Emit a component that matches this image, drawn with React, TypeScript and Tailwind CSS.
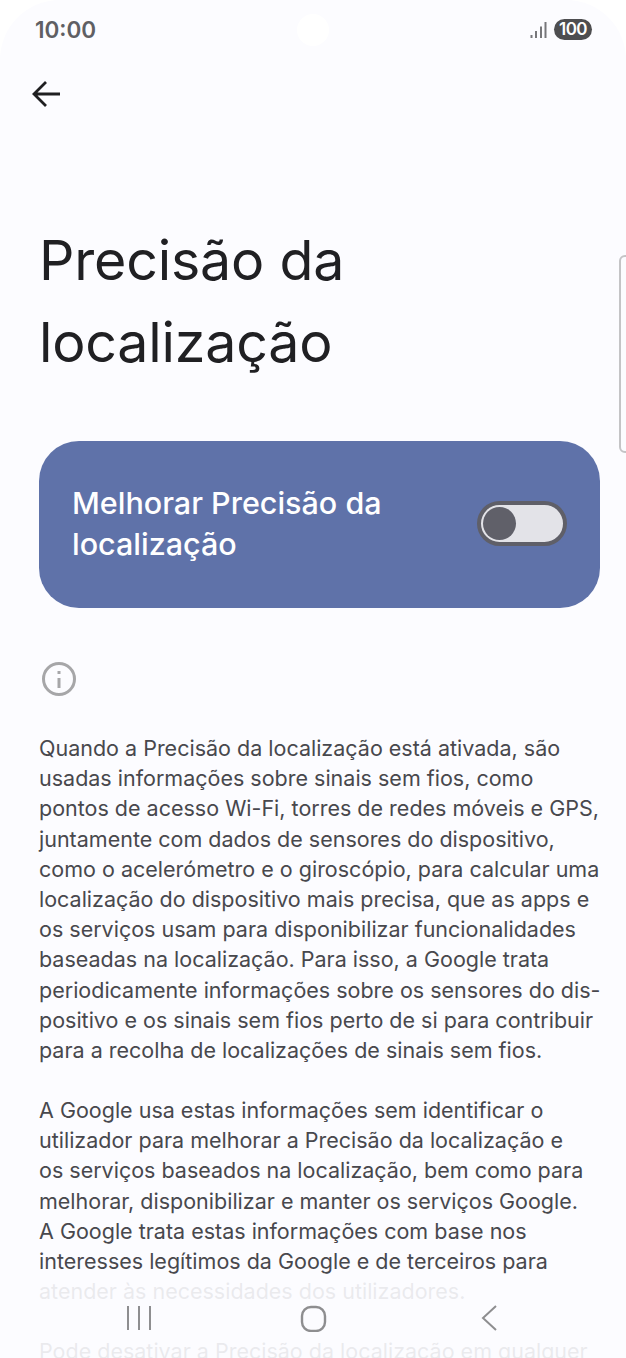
import React from "react";

const p1 = [
  "Quando a Precisão da localização está ativada, são",
  "usadas informações sobre sinais sem fios, como",
  "pontos de acesso Wi-Fi, torres de redes móveis e GPS,",
  "juntamente com dados de sensores do dispositivo,",
  "como o acelerómetro e o giroscópio, para calcular uma",
  "localização do dispositivo mais precisa, que as apps e",
  "os serviços usam para disponibilizar funcionalidades",
  "baseadas na localização. Para isso, a Google trata",
  "periodicamente informações sobre os sensores do dis-",
  "positivo e os sinais sem fios perto de si para contribuir",
  "para a recolha de localizações de sinais sem fios.",
];
const p2 = [
  "A Google usa estas informações sem identificar o",
  "utilizador para melhorar a Precisão da localização e",
  "os serviços baseados na localização, bem como para",
  "melhorar, disponibilizar e manter os serviços Google.",
  "A Google trata estas informações com base nos",
  "interesses legítimos da Google e de terceiros para",
  "atender às necessidades dos utilizadores.",
];
const p3 = ["Pode desativar a Precisão da localização em qualquer"];

function Para({ lines }: { lines: string[] }) {
  return (
    <div className="mb-[30px]">
      {lines.map((l) => (
        <div key={l} className="h-[30.2px] leading-[30.2px] whitespace-nowrap">
          {l}
        </div>
      ))}
    </div>
  );
}

export default function App() {
  return (
    <div className="relative h-[1358px] w-[626px] overflow-hidden bg-white font-['Inter','Roboto',sans-serif]">
      <div className="h-[1358px] overflow-hidden rounded-t-[60px] bg-[#fcfcff]">
        {/* status bar */}
        <div className="flex h-[58px] items-center justify-between pl-[35px] pr-[34px] pt-[1px]">
          <span className="text-[22.5px] font-semibold text-[#5f5f63]">10:00</span>
          <div className="flex items-center gap-[7px]">
            <svg width="17" height="18" viewBox="0 0 17 18" fill="none" stroke="#77777a" strokeWidth="2">
              <path d="M1.5 17v-3M6 17V10M11 17V5.5M15.5 17V1" />
            </svg>
            <span className="flex h-[21px] w-[38px] items-center justify-center rounded-full bg-[#4e4e50] text-[17px] font-semibold tracking-[-0.6px] text-white">
              100
            </span>
          </div>
        </div>

        {/* back */}
        <div className="h-[72px] pl-[31px] pt-[21px]">
          <svg width="30" height="30" viewBox="0 0 30 30" fill="none" stroke="#1f1f21" strokeWidth="2.8">
            <path d="M29 15H4M15 3L3 15l12 12" />
          </svg>
        </div>

        <div className="px-[40px] pt-[89px]">
          <h1 className="-ml-[1px] text-[55.5px] font-normal leading-[82px] tracking-[-0.2px] text-[#202023]">
            Precisão da
            <br />
            localização
          </h1>
        </div>

        {/* switch card */}
        <div className="ml-[39px] mr-[26px] mt-[58px] flex h-[167px] items-center justify-between rounded-[40px] bg-[#5f72a9] pb-[3px] pl-[33px] pr-[33px]">
          <div className="text-[30.5px] font-medium leading-[41px] text-white">
            Melhorar Precisão da
            <br />
            localização
          </div>
          <div className="flex h-[45px] w-[90px] items-center rounded-full border-4 border-[#5f5f68] bg-[#e3e3e8] pl-[2px]">
            <div className="h-[33px] w-[33px] rounded-full bg-[#606069]" />
          </div>
        </div>

        {/* info */}
        <div className="pl-[41px] pt-[53px]">
          <svg width="36" height="36" viewBox="0 0 36 36" fill="none" stroke="#a6a6a8" strokeWidth="3">
            <circle cx="18" cy="18" r="15.5" />
            <path d="M18 17v10" />
            <path d="M18 10v3" />
          </svg>
        </div>

        <div className="pl-[39px] pt-[36px] text-[21.5px] text-[#48484d]">
          <Para lines={p1} />
          <Para lines={p2} />
          <Para lines={p3} />
        </div>
      </div>

      {/* camera cutout */}
      <div className="absolute left-[297px] top-[14px] h-[32px] w-[32px] rounded-full bg-white" />

      {/* scrollbar */}
      <div className="absolute left-[619px] top-[255px] h-[198px] w-[20px] rounded-[6px] border-2 border-[#c4c4c6]" />

      {/* nav fade */}
      <div className="absolute bottom-0 left-0 h-[80px] w-full bg-[#fcfcff]/90">
        <svg className="absolute left-[126px] top-[26px]" width="26" height="28" viewBox="0 0 26 28" fill="none" stroke="#8e8e90" strokeWidth="2">
          <path d="M2 2v24M13 2v24M24 2v24" />
        </svg>
        <svg className="absolute left-[300px] top-[27px]" width="28" height="27" viewBox="0 0 28 27" fill="none" stroke="#8e8e90" strokeWidth="2.4">
          <rect x="2" y="2" width="23" height="24" rx="9" />
        </svg>
        <svg className="absolute left-[480px] top-[26px]" width="18" height="28" viewBox="0 0 18 28" fill="none" stroke="#8e8e90" strokeWidth="2">
          <path d="M16 2L3 14l13 12" />
        </svg>
      </div>
    </div>
  );
}
